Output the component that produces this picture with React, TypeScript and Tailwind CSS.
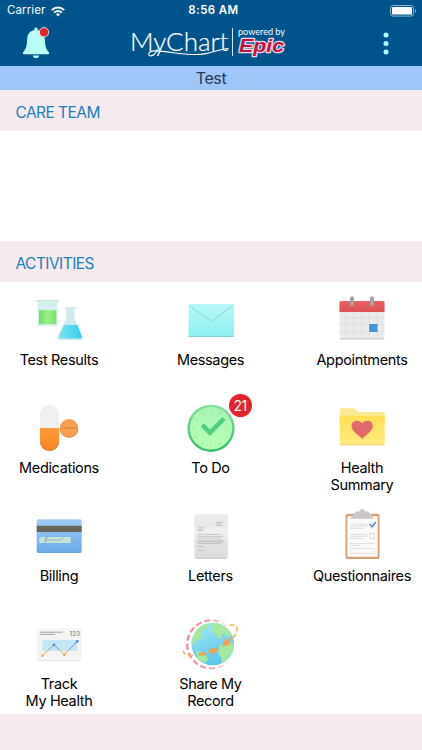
import type { ReactNode } from "react";

function StatusBar() {
  return (
    <div className="relative flex h-[22px] items-center justify-between pl-[7px] pr-[5px] text-white">
      <div className="flex items-center gap-[6px]">
        <span className="text-[11.5px] tracking-[0.1px]">Carrier</span>
        <svg width="14" height="11" viewBox="0 0 14 11" fill="none" stroke="#fff" strokeWidth="1.9">
          <path d="M0.8 4.1a8.8 8.8 0 0 1 12.4 0" />
          <path d="M3.1 6.6a5.5 5.5 0 0 1 7.8 0" />
          <path d="M7 10.5 4.9 8.3a3 3 0 0 1 4.2 0z" fill="#fff" stroke="none" />
        </svg>
      </div>
      <span className="absolute inset-x-0 pl-[5px] text-center text-[11.5px] font-semibold tracking-[0.4px]">8:56 AM</span>
      <svg width="27" height="12" viewBox="0 0 27 12">
        <rect x="0.5" y="0.5" width="23" height="10.6" rx="2.6" fill="none" stroke="#8fb4cf" />
        <rect x="2" y="2" width="20" height="7.6" rx="1.2" fill="#fff" />
        <path d="M25 4v4c1.3-.5 1.3-3.5 0-4z" fill="#8fb4cf" />
      </svg>
    </div>
  );
}

function Bell() {
  return (
    <svg width="28" height="34" viewBox="0 0 28 34">
      <path d="M12.3 5V3.3a1.7 1.7 0 0 1 3.4 0V5z" fill="#b9fcf6" />
      <path
        d="M14 4c5.700 0 8.500 3.700 8.800 9 .4 7 1 9.800 3.900 13 .8.9.5 2.200-.7 2.200H2c-1.200 0-1.500-1.300-.7-2.200 2.900-3.200 3.500-6 3.900-13C5.500 7.700 8.300 4 14 4z"
        fill="#b9fcf6"
      />
      <path d="M10.800 29.500h6.400c-.3 3.700-6.100 3.700-6.400 0z" fill="#b9fcf6" />
      <circle cx="22" cy="6.200" r="4.700" fill="#e3242b" stroke="#f4dfe6" strokeWidth="0.900" />
    </svg>
  );
}

function Logo() {
  return (
    <svg width="156" height="34" viewBox="0 0 156 34">
      <text x="-1" y="24.500" fill="#fff" fontFamily="Lato" fontSize="26" fontWeight="300" textLength="98.500" lengthAdjust="spacingAndGlyphs" stroke="#fff" strokeWidth="0.200">
        MyChart
      </text>
      <path
        d="M26.500 23c-2 4.800-4.500 7.500-7.500 6.700-2.800-1-1-4.700 4-4.800 16-.3 33 6.300 52 2.700 9-1.700 15-4.500 22.500-5.100"
        fill="none"
        stroke="#fff"
        strokeWidth="1.100"
      />
      <path d="M101.500 2v28" stroke="#d5e4ee" strokeWidth="1" />
      <text x="107" y="9" fill="#fff" fontFamily="Lato" fontSize="9" textLength="47" lengthAdjust="spacingAndGlyphs">
        powered by
      </text>
      <text
        x="108"
        y="25.500"
        fill="#c4123f"
        stroke="#eadbe6"
        strokeWidth="2.400"
        strokeLinejoin="round"
        paintOrder="stroke"
        fontFamily="Liberation Sans"
        fontSize="19"
        fontWeight="700"
        fontStyle="italic"
        textLength="45"
        lengthAdjust="spacingAndGlyphs"
      >
        Epic
      </text>
    </svg>
  );
}

function Icon({ children }: { children: ReactNode }) {
  return (
    <svg width="56" height="56" viewBox="0 0 56 56" className="shrink-0 overflow-visible">
      {children}
    </svg>
  );
}

function Gradient({ id, from, to }: { id: string; from: string; to: string }) {
  return (
    <linearGradient id={id} x1="0" y1="0" x2="0" y2="1">
      <stop stopColor={from} />
      <stop offset="1" stopColor={to} />
    </linearGradient>
  );
}

function TestResultsIcon() {
  return (
    <Icon>
      <defs>
        <linearGradient id="green">
          <stop stopColor="#6cdf62" />
          <stop offset="0.5" stopColor="#9af084" />
          <stop offset="1" stopColor="#74e466" />
        </linearGradient>
        <linearGradient id="cyan">
          <stop stopColor="#7be1f2" />
          <stop offset="1" stopColor="#35cfe9" />
        </linearGradient>
      </defs>
      <path d="M5 8h23v1.500l-1.500 1.600V34H6.600V11.100L5 9.500z" fill="#d6efee" />
      <path d="M8 18.200h17.300v14H8z" fill="url(#green)" />
      <path d="M5 8.500h23" stroke="#c3e4e3" />
      <path d="M34 15h11v2.300h-1.500v9.200l8.300 18.200c.6 1.900-.4 3.300-2.300 3.300h-21c-1.900 0-2.600-1.400-2-3.300L35.300 26.500v-9.200H34z" fill="#cdebec" />
      <path d="M33 33h13.300l4.500 11.300c.4 1.300-.1 2.200-1.300 2.200H29.200c-1.200 0-1.600-.9-1.200-2.200z" fill="url(#cyan)" />
    </Icon>
  );
}

function MessagesIcon() {
  return (
    <Icon>
      <defs>
        <Gradient id="mail" from="#b8f8f7" to="#8df0f0" />
      </defs>
      <rect x="5.5" y="12" width="45.5" height="33" rx="0.8" fill="url(#mail)" />
      <path d="M5.500 44.500H51" stroke="#7fd3d2" />
      <path d="M6.300 13.500 26.500 28.200c1 .7 2 .7 3 0L50.200 13.500" fill="none" stroke="#79d9d9" strokeWidth="0.900" />
    </Icon>
  );
}

function AppointmentsIcon() {
  return (
    <Icon>
      <defs>
        <Gradient id="red" from="#e86364" to="#db5052" />
      </defs>
      <rect x="5.5" y="10" width="45" height="37.5" rx="1.5" fill="#ebebeb" />
      <path d="M6 46.900h44" stroke="#c6c6c6" />
      <path d="M5.500 10.500A1.500 1.500 0 0 1 7 9h42a1.500 1.500 0 0 1 1.500 1.500V20h-45z" fill="url(#red)" />
      <path d="M12 20v26.500M19.800 20v26.500M27.600 20v26.500M35.400 20v26.500M43.500 20v26.500M5.500 26h45M5.500 32.300h45M5.500 39.700h45" stroke="#dadada" strokeWidth="0.800" />
      <rect x="35.3" y="32" width="8.2" height="8" fill="#4592d8" />
      <path d="M18 6.200v6M38 6.200v6" stroke="#a5a3a3" strokeWidth="4" strokeLinecap="round" />
    </Icon>
  );
}

function MedicationsIcon() {
  return (
    <Icon>
      <defs>
        <Gradient id="pill" from="#ff9b3b" to="#f58524" />
      </defs>
      <path d="M9 28V14.500a9.500 9.500 0 0 1 19 0V28z" fill="#f0f0f0" />
      <path d="M9 28v13.500a9.500 9.500 0 0 0 19 0V28z" fill="url(#pill)" />
      <path d="M9.500 41.500a9 9 0 0 0 18 0" fill="none" stroke="#d97f2c" strokeWidth="0.800" />
      <circle cx="38" cy="28.200" r="9.200" fill="#f6a04f" />
      <path d="M29 29.500a9.100 9.100 0 0 0 18 0" fill="none" stroke="#dc8b40" />
      <path d="M29.500 28h17" stroke="#d9873b" strokeWidth="1.200" />
    </Icon>
  );
}

function ToDoIcon() {
  return (
    <Icon>
      <defs>
        <Gradient id="ring" from="#88dfa0" to="#2fba67" />
        <Gradient id="face" from="#a7f4b4" to="#b8ffb4" />
      </defs>
      <circle cx="28" cy="28.300" r="23.600" fill="url(#ring)" />
      <circle cx="28" cy="28.300" r="21.200" fill="url(#face)" />
      <circle cx="28" cy="28.300" r="17.800" fill="none" stroke="#90dca0" strokeWidth="3.200" strokeDasharray="0.700 8.620" strokeDashoffset="0.350" />
      <path d="m19.300 24.800 7.700 8 14-14.300" fill="none" stroke="#4fce82" strokeWidth="4.600" />
    </Icon>
  );
}

function HealthSummaryIcon() {
  return (
    <Icon>
      <defs>
        <Gradient id="folder" from="#ffe053" to="#ffe980" />
      </defs>
      <path d="M5.700 10c0-1 .6-1.700 1.600-1.700h12.500c2.500 0 2.200 3.700 5 3.700H49c1 0 1.700.7 1.700 1.700V25h-45z" fill="#fbe995" />
      <path d="M5.700 15.800h45V44c0 .7-.5 1.200-1.200 1.200H7c-.8 0-1.300-.5-1.300-1.200z" fill="url(#folder)" />
      <path d="M6.200 44.800h44" stroke="#e5cf69" strokeWidth="0.900" />
      <path
        d="M28.200 39c-2-3.300-10.700-7.200-10.700-13.300 0-5.400 7.800-7 10.700-2.200 2.900-4.800 10.600-3.200 10.600 2.200 0 6.100-8.600 10-10.600 13.300z"
        fill="#df6a69"
      />
    </Icon>
  );
}

function BillingIcon() {
  return (
    <Icon>
      <defs>
        <Gradient id="card" from="#a1cdf5" to="#69a9e8" />
      </defs>
      <rect x="5.7" y="11.3" width="45" height="33.7" rx="1.5" fill="url(#card)" />
      <path d="M5.700 17.800h45V24h-45z" fill="#6b665a" />
      <path d="M8.300 29h31.400v6H8.300z" fill="#c6e3da" />
      <path d="M11 37.500c3-3 4.500-5 5-8.700-2 2.500-2.500 5.200-.5 4 2-1.100 3-1.500 4.500-.8s3 .3 5.500 0c3 .8 6-.6 8-3.400" fill="none" stroke="#7fa5ae" strokeWidth="0.700" />
    </Icon>
  );
}

function LettersIcon() {
  return (
    <Icon>
      <defs>
        <Gradient id="paper" from="#ececec" to="#dcdcdc" />
      </defs>
      <rect x="11.3" y="6.3" width="33.6" height="44.5" rx="2" fill="url(#paper)" />
      <path d="M11.300 19H45v12.500H11.300z" fill="#fff" opacity="0.350" />
      <path d="M12.500 50.300h31" stroke="#c4c4c4" strokeWidth="0.800" />
      <path
        d="M33 14.500h6.700M33 16h6M33 17.500h5.500M14.500 19.700h7M14.500 21.200h6M14.500 22.600h5.500M14.500 26.400h23.500M14.500 28.400h26M14.500 30.200h24M14.500 32.700h27M14.500 34h26M14.500 35.500h24M14.500 38.700h6.500M14.500 42.500h6.500"
        stroke="#bcbcbc"
        strokeWidth="0.800"
      />
    </Icon>
  );
}

function QuestionnairesIcon() {
  return (
    <Icon>
      <rect x="11.5" y="5.7" width="34" height="45.3" rx="2" fill="#d6a074" />
      <path d="M13.300 8.300h30.400v40.500H13.300z" fill="#fafafa" />
      <path d="M28.200 1c1.900 0 2.600 1 3 2.600h3.600c1 3.400 3.800 3.500 5 7.100H16.600c1.200-3.600 4-3.700 5-7.100h3.600c.4-1.600 1.100-2.600 3-2.600z" fill="#c8c8c8" />
      <path d="M16 16.300h17.500M16 18.300h17.500M16 20.300h13.500M16 26.300h17.500M16 28.300h17.500M16 30.400h13.500M16 35.600h24M16 37.500h9" stroke="#d6d6d6" strokeWidth="0.800" />
      <rect x="36" y="15.3" width="4.500" height="4.500" fill="none" stroke="#d9d9d9" strokeWidth="0.700" />
      <rect x="36" y="25.5" width="4.500" height="4.800" fill="none" stroke="#d3d3d3" strokeWidth="0.700" />
      <rect x="16.2" y="40.7" width="24" height="4.800" fill="none" stroke="#dcdcdc" strokeWidth="0.700" />
      <path d="m35.700 16.200 2.300 2.500 4-4.700" fill="none" stroke="#5a7fbb" strokeWidth="1.300" />
    </Icon>
  );
}

function TrackIcon() {
  return (
    <Icon>
      <defs>
        <linearGradient id="trend" gradientUnits="userSpaceOnUse" x1="0" y1="26" x2="0" y2="40">
          <stop stopColor="#4285d6" />
          <stop offset="0.5" stopColor="#7f99b0" />
          <stop offset="0.65" stopColor="#efa245" />
          <stop offset="1" stopColor="#efa245" />
        </linearGradient>
      </defs>
      <rect x="5.7" y="12.5" width="45" height="32.5" rx="1.5" fill="#f4f4f4" />
      <path d="M6.500 44.600h43.500" stroke="#dedede" strokeWidth="0.800" />
      <path d="M9.200 16.200h22.500M9.200 18.300h15" stroke="#a3a3a3" strokeWidth="1" />
      <text x="38.500" y="19.700" fill="#858585" fontSize="6.300" fontWeight="500" textLength="10.500" fontFamily="Inter">
        123
      </text>
      <path d="M11.300 24h35.200v11H11.300z" fill="#c4e8f3" />
      <path d="m11.300 39.700 11.700-11 10.300 10 13-13.400" fill="none" stroke="url(#trend)" strokeWidth="1" />
      <circle cx="11.300" cy="39.700" r="1.300" fill="#efa245" />
      <circle cx="23" cy="28.700" r="1.300" fill="#4285d6" />
      <circle cx="33.300" cy="38.700" r="1.300" fill="#efa245" />
      <circle cx="46.300" cy="25.300" r="1.300" fill="#4285d6" />
    </Icon>
  );
}

function ShareIcon() {
  return (
    <Icon>
      <defs>
        <linearGradient id="sea" x1="0.300" y1="0" x2="0.700" y2="1">
          <stop stopColor="#9be5f5" />
          <stop offset="1" stopColor="#59c3e6" />
        </linearGradient>
        <linearGradient id="orbit">
          <stop stopColor="#f4868c" />
          <stop offset="0.55" stopColor="#f2a5a9" />
          <stop offset="0.9" stopColor="#fbe9ea" />
        </linearGradient>
        <clipPath id="globe">
          <circle cx="29.700" cy="28" r="21.300" />
        </clipPath>
      </defs>
      <circle cx="29.700" cy="28" r="21.300" fill="url(#sea)" />
      <g clipPath="url(#globe)" fill="#a5e8a0">
        <path d="M9 23c2-7 6-12 12-15l4 1-2 4-4 1-1 4 2 3-4 3-3-1-2 5-3-1z" />
        <path d="m26 8 6-2 7 2 6 5 4 7-5 1-3-4-3 2 1 4-4-1-3-4-4-2 2-4z" />
        <path d="m37 29 7-3 7 2v8l-5 4-4 8-3 1-1-8-3-4z" />
        <path d="m13 35 5 1 6 4 1 4-4 3-7-5z" />
      </g>
      <path d="M44 10.300A24 24 0 1 0 45.500 45" fill="none" stroke="url(#orbit)" strokeWidth="2.200" strokeDasharray="6 3" />
      <path d="M10 39.500C4 40.500 0 38.500.4 33.500" fill="none" stroke="#f3b354" strokeWidth="1.600" strokeDasharray="5 2.500" />
      <path d="M46.500 9.200c6-1 8 1 7.500 4.500-.4 4-2.500 7-5.500 10" fill="none" stroke="#f3b354" strokeWidth="1.500" strokeDasharray="5 2.500" />
      <path d="M16 38.700 23 37.500" stroke="#f3a04b" strokeWidth="2.800" />
      <path d="m25 35.800 4.500-4.300.5 1.500 5-2-1 4-4 2 .3 1.500zM39 30.800l2.700-8.300 1.700 1.700 7-4.500-4.700 7 1.800 1.500z" fill="#f3a04b" />
    </Icon>
  );
}

const activities = [
  { label: "Test Results", icon: <TestResultsIcon /> },
  { label: "Messages", icon: <MessagesIcon /> },
  { label: "Appointments", icon: <AppointmentsIcon /> },
  { label: "Medications", icon: <MedicationsIcon /> },
  { label: "To Do", icon: <ToDoIcon />, badge: 21 },
  { label: "Health\nSummary", icon: <HealthSummaryIcon /> },
  { label: "Billing", icon: <BillingIcon /> },
  { label: "Letters", icon: <LettersIcon /> },
  { label: "Questionnaires", icon: <QuestionnairesIcon /> },
  { label: "Track\nMy Health", icon: <TrackIcon /> },
  { label: "Share My\nRecord", icon: <ShareIcon /> },
];

function SectionTitle({ children }: { children: ReactNode }) {
  return (
    <h2 className="flex h-[41px] shrink-0 items-center bg-[#f5eaee] px-[15.5px] pt-[5px] text-[15.5px] tracking-[-0.55px] text-[#1b80b9]">
      {children}
    </h2>
  );
}

export default function App() {
  return (
    <div className="flex h-[750px] w-[422px] flex-col overflow-hidden bg-[#f5eaee] font-['Inter',sans-serif]">
      <header className="h-[66px] shrink-0 bg-[#00548c]">
        <StatusBar />
        <div className="flex items-start pl-[22px] pt-[4px]">
          <Bell />
          <div className="ml-[81px]">
            <Logo />
          </div>
          <svg width="6" height="24" viewBox="0 0 6 24" fill="#b9fcf6" className="ml-24 mt-[6px]">
            <circle cx="3" cy="3" r="2.500" />
            <circle cx="3" cy="11.600" r="2.500" />
            <circle cx="3" cy="20" r="2.500" />
          </svg>
        </div>
      </header>
      <div className="flex h-6 shrink-0 items-center justify-center bg-[#9fc6f8] text-base tracking-[-0.4px] text-[#26384f]">Test</div>
      <SectionTitle>CARE TEAM</SectionTitle>
      <div className="h-[110px] shrink-0 bg-white" />
      <SectionTitle>ACTIVITIES</SectionTitle>
      <div className="grid shrink-0 grid-cols-[repeat(3,102px)] justify-between bg-white pl-2 pr-[9px]">
        {activities.map((a) => (
          <div key={a.label} className="flex h-[108px] flex-col items-center pt-[10px]">
            <div className="relative">
              {a.icon}
              {a.badge && (
                <span className="absolute -right-[13px] -top-[6px] flex size-[23px] items-center justify-center rounded-full bg-[#e3242b] text-[14px] tracking-[-0.5px] text-white">
                  {a.badge}
                </span>
              )}
            </div>
            <span className="mt-[3px] whitespace-pre text-center text-[14.5px] leading-[17px] tracking-[-0.35px] text-black">{a.label}</span>
          </div>
        ))}
      </div>
    </div>
  );
}
